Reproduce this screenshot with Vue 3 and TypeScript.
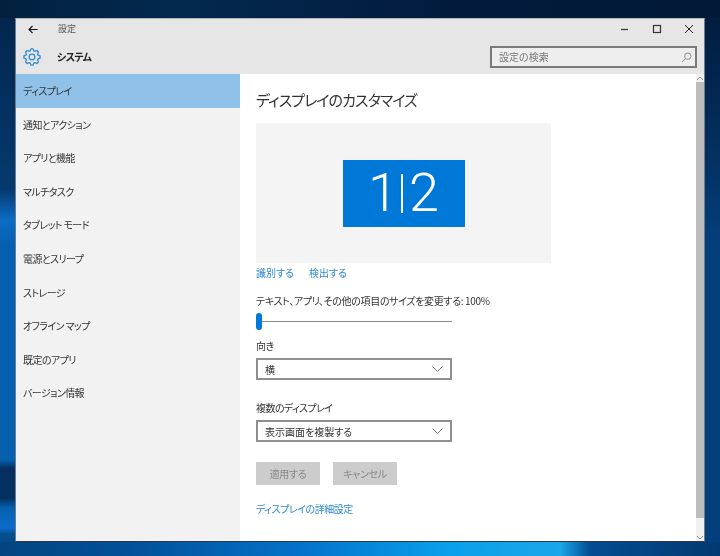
<script setup lang="ts">
const items: string[] = ['ディスプレイ', '通知とアクション', 'アプリと機能', 'マルチタスク', 'タブレット モード', '電源とスリープ', 'ストレージ', 'オフライン マップ', '既定のアプリ', 'バージョン情報']

function gearPath(): string {
  const pts: string[] = []
  for (let i = 0; i < 8; i++) {
    const a = (i * Math.PI) / 4 - Math.PI / 2
    const spec: [number, number][] = [[8.4, -0.3], [10.9, -0.14], [10.9, 0.14], [8.4, 0.3]]
    for (const [r, d] of spec) {
      pts.push(`${(12 + r * Math.cos(a + d)).toFixed(2)} ${(12 + r * Math.sin(a + d)).toFixed(2)}`)
    }
  }
  return 'M' + pts.join('L') + 'Z'
}
const gear = gearPath()
</script>

<template>
  <div class="desktop">
    <div class="window">
      <header class="head">
        <div class="titlebar">
          <svg class="back" width="10" height="9" viewBox="0 0 10 9"><path d="M9.500 4.500H1M4.500 1 1 4.500 4.500 8" fill="none" stroke="#111" stroke-width="1.100" /></svg>
          <span class="title">設定</span>
          <div class="caption">
            <svg width="10" height="10" viewBox="0 0 10 10"><path d="M1 5.500h7" stroke="#333" stroke-width="1.200" /></svg>
            <svg width="10" height="10" viewBox="0 0 10 10"><rect x="1.500" y="1.500" width="7" height="7" fill="none" stroke="#333" stroke-width="1.200" /></svg>
            <svg width="10" height="10" viewBox="0 0 10 10"><path d="M1 1l8 8M9 1 1 9" stroke="#222" stroke-width="1" /></svg>
          </div>
        </div>
        <div class="subbar">
          <svg class="gear" width="18" height="18" viewBox="0 0 24 24"><path :d="gear" fill="none" stroke="#2e8ad6" stroke-width="1.700" stroke-linejoin="round" /><circle cx="12" cy="12" r="3.800" fill="none" stroke="#2e8ad6" stroke-width="1.700" /></svg>
          <span class="section">システム</span>
          <div class="search">
            <span>設定の検索</span>
            <svg width="11" height="11" viewBox="0 0 11 11"><circle cx="6.800" cy="4.200" r="3.200" fill="none" stroke="#8a8a8a" /><path d="M4.500 6.500 1 10" stroke="#8a8a8a" /></svg>
          </div>
        </div>
      </header>
      <div class="body">
        <nav class="side">
          <div v-for="(it, i) in items" :key="it" class="item" :class="{ active: i === 0 }">{{ it }}</div>
        </nav>
        <main class="content">
          <h1>ディスプレイのカスタマイズ</h1>
          <div class="preview"><div class="mon"><span>1</span><i></i><span>2</span></div></div>
          <div class="links"><a>識別する</a><a>検出する</a></div>
          <p class="scale">テキスト、アプリ、その他の項目のサイズを変更する: 100%</p>
          <div class="slider"><i></i></div>
          <p class="lab">向き</p>
          <div class="sel">横<svg width="11" height="6" viewBox="0 0 11 6"><path d="M.5.500l5 5 5-5" fill="none" stroke="#777" /></svg></div>
          <p class="lab multi">複数のディスプレイ</p>
          <div class="sel">表示画面を複製する<svg width="11" height="6" viewBox="0 0 11 6"><path d="M.5.500l5 5 5-5" fill="none" stroke="#777" /></svg></div>
          <div class="btns"><button>適用する</button><button>キャンセル</button></div>
          <a class="adv">ディスプレイの詳細設定</a>
        </main>
        <div class="scroll">
          <svg width="8" height="5" viewBox="0 0 8 5"><path d="M1 4l3-3 3 3" fill="none" stroke="#8a8a8a" /></svg>
          <div class="thumb"></div>
          <svg width="8" height="5" viewBox="0 0 8 5"><path d="M1 1l3 3 3-3" fill="none" stroke="#8a8a8a" /></svg>
        </div>
      </div>
    </div>
  </div>
</template>

<style>
html, body { margin: 0; }
</style>

<style scoped>
.desktop {
  width: 720px; height: 556px; box-sizing: border-box; overflow: hidden;
  padding: 18px 15px 14px;
  background-color: #03305f;
  background-repeat: no-repeat;
  background-image:
    linear-gradient(90deg, #02213f 0, #03294f 180px, #021b3d 450px, #021a37 720px),
    linear-gradient(90deg, #03457f 0, #025098 130px, #0372c8 300px, #0aa0ea 450px, #1aa6e8 560px, #034c92 590px, #03396f 720px),
    linear-gradient(180deg, #03234a 0, #053a70 190px, #0a6cc4 220px, #0660b0 245px, #0660ae 460px, #042f60 468px, #04305f 498px, #0660b0 508px, #0b6ccb 528px, #03508f 534px, #05457f 556px),
    linear-gradient(180deg, #021a3a 0, #03305f 150px, #043f7d 250px, #043f7d 556px);
  background-size: 100% 18px, 100% 14px, 15px 100%, 15px 100%;
  background-position: 0 0, 0 100%, 0 0, 100% 0;
  font-family: "Noto Sans CJK JP", "Noto Sans", sans-serif;
  font-feature-settings: "palt";
  color: #333;
  filter: blur(.3px);
}
.window { height: 524px; box-sizing: border-box; display: flex; flex-direction: column; background: #fff; border: 1px solid #6d7d8c; border-top-color: #b5b5b5; border-bottom-color: #2b3a4a; }
.head { background: #e6e6e6; height: 55px; flex: none; }
.titlebar { height: 20px; display: flex; align-items: center; font-size: 9px; color: #555; }
.back { margin: 0 0 0 12px; }
.title { margin-left: 20px; margin-bottom: 1px; }
.caption { margin-left: auto; display: flex; gap: 22px; margin-right: 10px; }
.subbar { height: 35px; display: flex; align-items: center; }
.gear { margin-left: 7px; }
.section { margin-left: 16px; margin-bottom: 1px; font-size: 10px; letter-spacing: -.6px; font-weight: 700; color: #222; }
.search { margin-left: auto; margin-right: 7px; margin-top: 1px; height: 18px; border: 2px solid #7a7a7a; background: #eee; display: flex; align-items: center; justify-content: space-between; padding: 0 3px 0 7px; width: 193px; font-size: 10px; color: #777; }
.search span { margin-bottom: 2px; }
.body { flex: 1; display: flex; min-height: 0; }
.side { width: 224px; background: #f2f2f2; flex: none; }
.item { height: 33.600px; box-sizing: border-box; padding-left: 7px; line-height: 33px; font-size: 10px; letter-spacing: -.6px; color: #333; }
.item.active { background: #90c1e9; }
.content { flex: 1; padding-left: 16px; min-width: 0; }
h1 { margin: 16px 0 0; font-size: 15px; letter-spacing: -.95px; line-height: 20px; font-weight: 400; color: #333; }
.preview { width: 295px; height: 140px; margin-top: 13px; background: #f4f4f4; display: flex; align-items: center; justify-content: center; }
.mon { width: 122px; height: 67px; background: #0078d7; color: #fff; display: flex; align-items: center; justify-content: center; font: 300 54px/1 Roboto, sans-serif; }
.mon span { display: block; }
.mon i { display: block; width: 2px; height: 39px; background: #fff; margin: 0 6px 0 3px; }
.links { display: flex; gap: 15px; margin-top: 3px; line-height: 14px; height: 14px; font-size: 10px; color: #2b87d3; }
.scale { margin: 14px 0 0; line-height: 14px; font-size: 10px; letter-spacing: -.35px; color: #333; }
.slider { position: relative; width: 196px; height: 1px; background: #8a8a8a; margin-top: 13px; }
.slider i { position: absolute; left: 0; top: -8px; width: 6px; height: 17px; border-radius: 3px; background: #0078d7; }
.lab { margin: 17px 0 0; line-height: 14px; font-size: 10px; letter-spacing: -.6px; color: #333; }
.lab.multi { margin-top: 21px; }
.sel { width: 196px; height: 22px; box-sizing: border-box; margin-top: 5px; border: 2px solid #8f8f8f; padding: 0 7px; display: flex; align-items: center; justify-content: space-between; font-size: 10px; color: #333; background: #fff; }
.btns { display: flex; gap: 13px; margin-top: 20px; }
button { width: 64px; height: 23px; padding: 0; border: 0; background: #cccccc; color: #888; font: inherit; font-size: 10px; letter-spacing: -.3px; }
.adv { display: block; margin-top: 17px; line-height: 14px; font-size: 10px; letter-spacing: -.45px; color: #2b87d3; }
.scroll { width: 8px; flex: none; display: flex; flex-direction: column; align-items: center; background: #f0f0f0; padding-top: 2px; }
.thumb { width: 8px; height: 436px; margin: 1px 0 17px; background: #bdbdbd; flex: none; }
</style>
